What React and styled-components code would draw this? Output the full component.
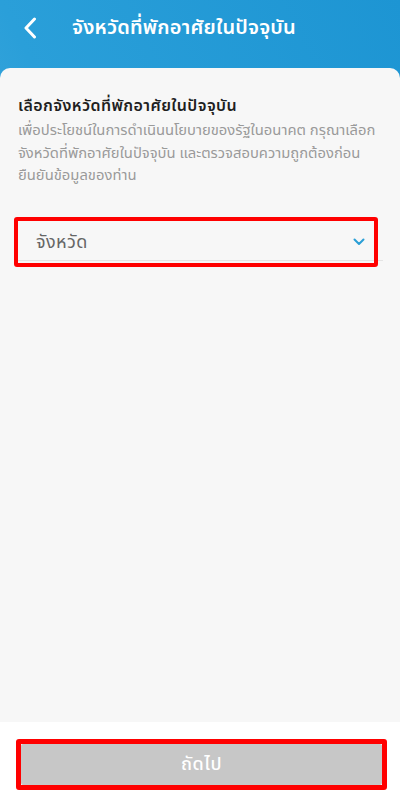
import React from "react";
import styled, { createGlobalStyle } from "styled-components";

const Global = createGlobalStyle`
  html, body { margin: 0; padding: 0; }
  body { font-family: "Noto Sans Thai", "Noto Sans", "DejaVu Sans", sans-serif; }
  * { box-sizing: border-box; }
`;

const Page = styled.div`
  width: 400px;
  height: 802px;
  display: flex;
  flex-direction: column;
  background: linear-gradient(to top right, #5cb6e2 0%, #2a9fd9 50%, #1d95d3 100%);
  overflow: hidden;
`;

const Header = styled.div`
  height: 68px;
  flex: none;
  display: flex;
  align-items: center;
  padding: 0 0 12px 20px;
  gap: 32px;
`;

const BackButton = styled.button`
  width: 20px;
  height: 24px;
  padding: 0;
  border: none;
  background: none;
  display: flex;
  align-items: center;
  justify-content: center;
`;

const Title = styled.h1`
  margin: 0;
  color: #fff;
  font-size: 20px;
  font-weight: 600;
  letter-spacing: 0.2px;
`;

const Card = styled.div`
  flex: 1;
  display: flex;
  flex-direction: column;
  background: #f7f7f7;
  border-radius: 10px 10px 0 0;
`;

const Content = styled.div`
  flex: 1;
  padding: 26px 17px 0 18px;
`;

const Heading = styled.h2`
  margin: 0 0 2px;
  font-size: 16px;
  font-weight: 600;
  color: #1f1f1f;
  line-height: 24px;
  letter-spacing: 0.4px;
`;

const Desc = styled.p`
  margin: 0;
  font-size: 14.8px;
  color: #9a9a9a;
  line-height: 22.5px;
`;

const SelectField = styled.div`
  position: relative;
  margin-top: 33px;
  height: 40px;
  display: flex;
  align-items: center;
  justify-content: space-between;
  padding: 4px 18px 0 18px;
  border-bottom: 1px solid #e4e4e4;
`;

const Placeholder = styled.span`
  font-size: 18px;
  color: #666;
  letter-spacing: 0.4px;
`;

const Highlight = styled.div`
  position: absolute;
  border: ${(p) => p.$w}px solid #f00;
  border-radius: 3px;
  pointer-events: none;
  left: ${(p) => p.$l}px;
  right: ${(p) => p.$r}px;
  top: ${(p) => p.$t}px;
  bottom: ${(p) => p.$b}px;
`;

const Footer = styled.div`
  height: 80px;
  flex: none;
  background: #fff;
  padding: 22px 18px 0 21px;
`;

const NextButton = styled.button`
  position: relative;
  width: 100%;
  height: 41px;
  border: none;
  border-radius: 2px;
  background: #c7c7c7;
  color: #fff;
  font-family: inherit;
  font-size: 18px;
  font-weight: 500;
  letter-spacing: 0.6px;
  display: flex;
  align-items: center;
  justify-content: center;
`;

export default function App() {
  return (
    <>
      <Global />
      <Page>
        <Header>
          <BackButton aria-label="back">
            <svg width="14" height="22" viewBox="0 0 14 22">
              <path d="M11.5 2 L3 11 L11.5 20" fill="none" stroke="#fff" strokeWidth="3" strokeLinecap="round" strokeLinejoin="round" />
            </svg>
          </BackButton>
          <Title>จังหวัดที่พักอาศัยในปัจจุบัน</Title>
        </Header>
        <Card>
          <Content>
            <Heading>เลือกจังหวัดที่พักอาศัยในปัจจุบัน</Heading>
            <Desc>
              เพื่อประโยชน์ในการดำเนินนโยบายของรัฐในอนาคต กรุณาเลือกจังหวัดที่พักอาศัยในปัจจุบัน และตรวจสอบความถูกต้องก่อนยืนยันข้อมูลของท่าน
            </Desc>
            <SelectField>
              <Placeholder>จังหวัด</Placeholder>
              <svg width="12" height="8" viewBox="0 0 12 8">
                <path d="M1.5 1.5 L6 6 L10.5 1.5" fill="none" stroke="#2a9fd6" strokeWidth="2" strokeLinecap="round" strokeLinejoin="round" />
              </svg>
              <Highlight $w={4} $l={-4} $r={5} $t={-4} $b={-7} />
            </SelectField>
          </Content>
          <Footer>
            <NextButton>
              ถัดไป
              <Highlight $w={5} $l={-5} $r={-5} $t={-5} $b={-5} />
            </NextButton>
          </Footer>
        </Card>
      </Page>
    </>
  );
}
